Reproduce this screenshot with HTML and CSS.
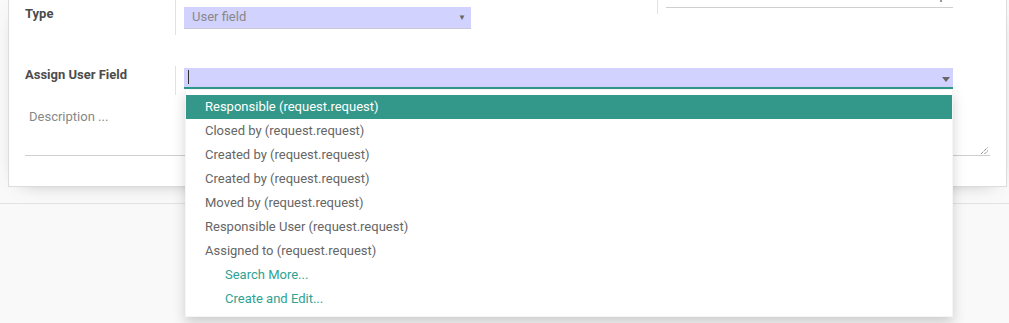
FILE: index.html
```html
<!DOCTYPE html>
<html>
<head>
<meta charset="utf-8">
<link rel="stylesheet" href="styles.css">
</head>
<body>
<div class="view">
  <div class="sheet">
    <div class="row1">
      <div class="lbl">Type</div>
      <div class="cell">
        <div class="select"><span>User field</span><span class="caret-s">▼</span></div>
      </div>
      <div class="rgroup">
        <div class="rinput"><span class="rmark"></span></div>
      </div>
    </div>
    <div class="row2">
      <div class="lbl lbl2">Assign User Field</div>
      <div class="cell">
        <div class="input">
          <span class="cursor"></span>
          <svg class="caret" width="8" height="5" viewBox="0 0 8 5"><path d="M0 0H8L4 5Z" fill="#666"/></svg>
        </div>
      </div>
    </div>
    <div class="desc">
      <span class="ph">Description ...</span>
      <svg class="grip" width="9" height="9" viewBox="0 0 9 9"><path d="M1 8L8 1M4.5 8L8 4.5" stroke="#555" stroke-width="1" stroke-dasharray="1 1" fill="none"/></svg>
    </div>
  </div>
  <div class="chatter"></div>
</div>
<ul class="dropdown">
  <li class="item active">Responsible (request.request)</li>
  <li class="item">Closed by (request.request)</li>
  <li class="item">Created by (request.request)</li>
  <li class="item">Created by (request.request)</li>
  <li class="item">Moved by (request.request)</li>
  <li class="item">Responsible User (request.request)</li>
  <li class="item">Assigned to (request.request)</li>
  <li class="item link">Search More...</li>
  <li class="item link">Create and Edit...</li>
</ul>
</body>
</html>
```
FILE: styles.css
```css
html, body {
  margin: 0;
  padding: 0;
  background: #f9f9f9;
  font-family: Roboto, "Liberation Sans", sans-serif;
  font-size: 13px;
  color: #4c4c4c;
  overflow: hidden;
}
.view {
  width: 1009px;
  height: 323px;
}
.sheet {
  margin-left: 8px;
  width: 999px;
  height: 187px;
  box-sizing: border-box;
  background: #fff;
  border: 1px solid #dcdcdc;
  border-top: 0;
  padding: 0 16px;
  box-shadow: 0 5px 20px -15px rgba(0,0,0,0.6);
}
.row1 {
  display: flex;
  align-items: flex-start;
  height: 35px;
}
.lbl {
  width: 151px;
  box-sizing: border-box;
  border-right: 1px solid #e2e2e2;
  height: 35px;
  padding-top: 5px;
  line-height: 18px;
  font-weight: bold;
  color: #4c4c4c;
}
.cell {
  padding-left: 8px;
}
.select {
  margin-top: 7px;
  width: 287px;
  height: 22px;
  box-sizing: border-box;
  background: #d2d2ff;
  border-bottom: 1px solid #c8c8d8;
  padding: 0 5px 0 8px;
  line-height: 19px;
  color: #888;
  display: flex;
  justify-content: space-between;
}
.caret-s {
  font-size: 8px;
  color: #666;
  line-height: 21px;
}
.rgroup {
  margin-left: 186px;
  height: 14px;
  border-left: 1px solid #e2e2e2;
  padding-left: 8px;
}
.rinput {
  width: 287px;
  height: 8px;
  box-sizing: border-box;
  border-bottom: 1px solid #cfcfcf;
  display: flex;
  justify-content: flex-end;
  align-items: flex-start;
}
.rmark {
  width: 2px;
  height: 2px;
  background: #999;
  margin-right: 11px;
}
.row2 {
  margin-top: 31px;
  display: flex;
  align-items: flex-start;
  height: 29px;
}
.lbl2 {
  height: 29px;
  padding-top: 0;
}
.input {
  margin-top: 2px;
  width: 769px;
  height: 21px;
  box-sizing: border-box;
  background: #d2d2ff;
  border-bottom: 2px solid #2f9a8c;
  display: flex;
  justify-content: space-between;
  align-items: flex-start;
  padding: 0 3px 0 4px;
}
.cursor {
  width: 1px;
  height: 14px;
  margin-top: 2px;
  background: #333;
}
.caret {
  margin-top: 9px;
}
.desc {
  margin-top: 5px;
  width: 965px;
  height: 56px;
  box-sizing: border-box;
  border-bottom: 1px solid #cfcfcf;
  padding: 8px 4px;
  line-height: 18px;
  display: flex;
  justify-content: space-between;
  align-items: flex-end;
}
.ph {
  color: #888;
  align-self: flex-start;
}
.grip {
  margin-bottom: -8px;
  margin-right: -3px;
}
.chatter {
  margin-top: 16px;
  border-top: 1px solid #e2e2e2;
}
.dropdown {
  position: absolute;
  top: 89px;
  left: 185px;
  width: 768px;
  box-sizing: border-box;
  margin: 0;
  padding: 5px 0;
  list-style: none;
  background: #fff;
  border: 1px solid rgba(0,0,0,0.04);
  box-shadow: 0 6px 12px rgba(0,0,0,0.175);
}
.item {
  height: 24px;
  line-height: 24px;
  padding-left: 19px;
  color: #666;
  white-space: nowrap;
}
.item.active {
  background: #339789;
  color: #fff;
}
.item.link {
  padding-left: 39px;
  color: #2ea394;
}
```
